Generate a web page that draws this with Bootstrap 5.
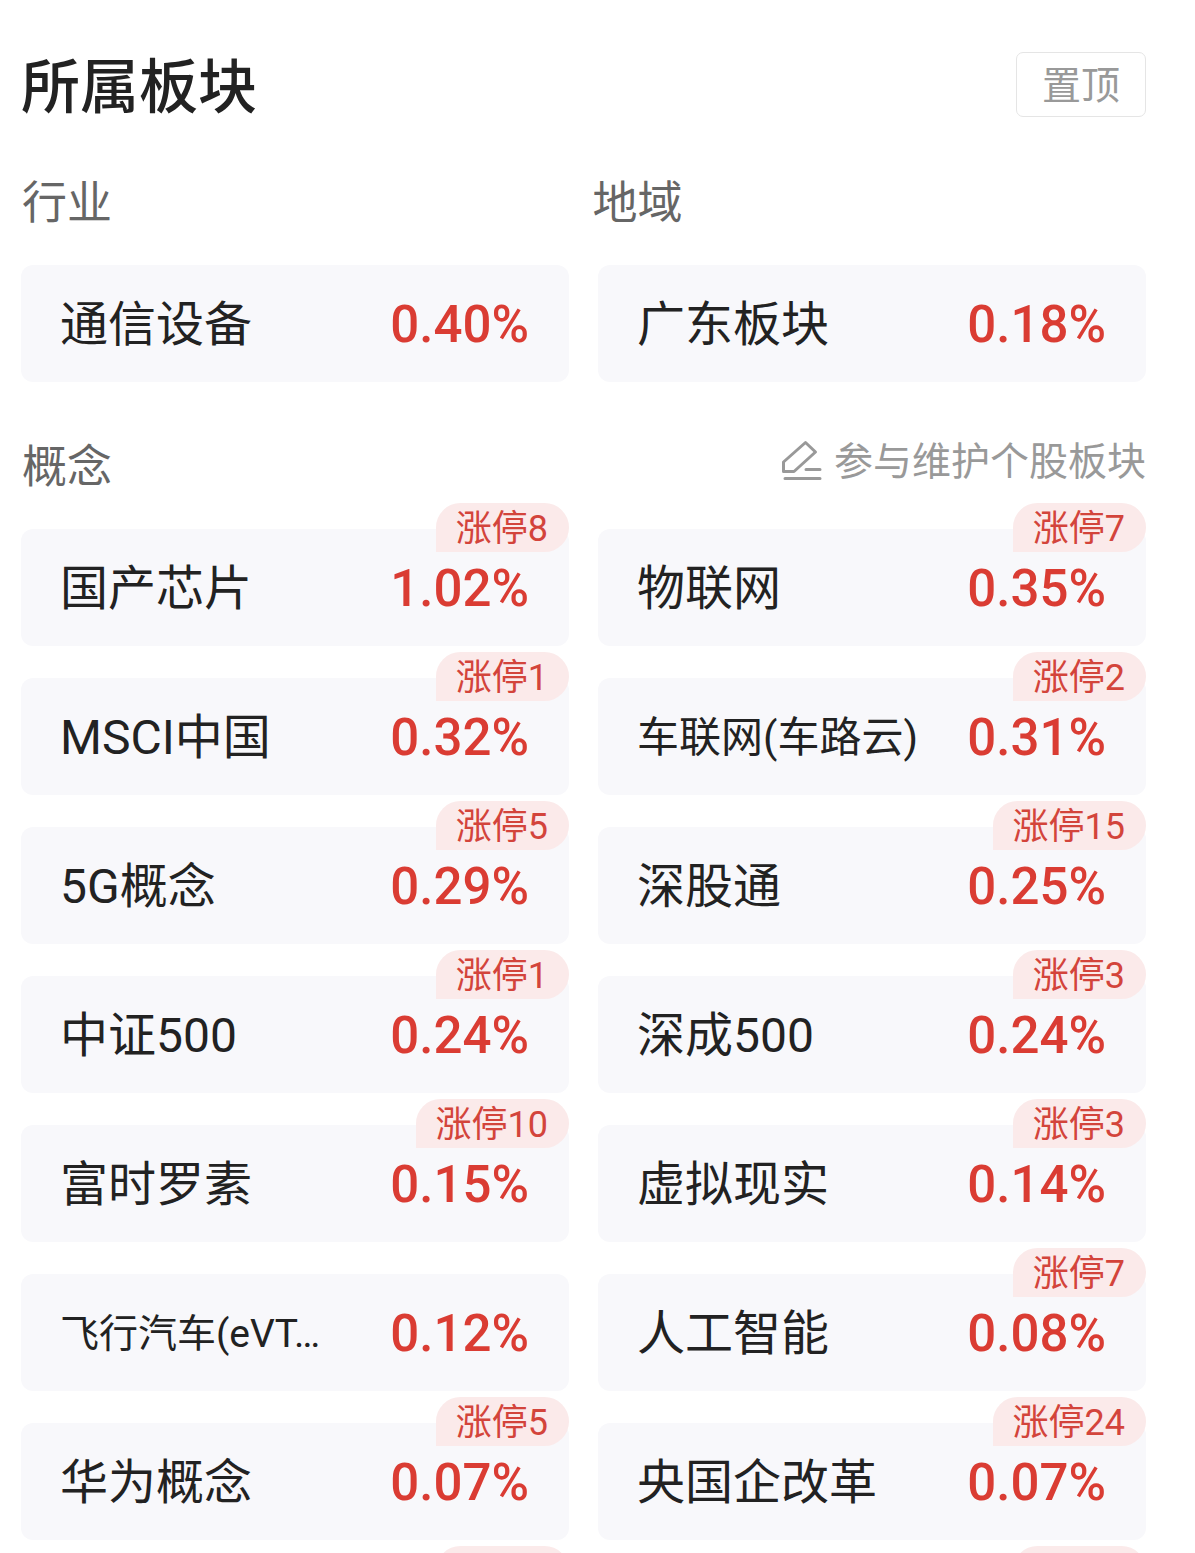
<!DOCTYPE html>
<html lang="zh-CN">
<head>
<meta charset="utf-8">
<meta name="viewport" content="width=device-width, initial-scale=1">
<title>所属板块</title>
<link href="https://cdn.jsdelivr.net/npm/bootstrap@5.3.0/dist/css/bootstrap.min.css" rel="stylesheet">
<style>
body { font-family: "Noto Sans CJK SC", sans-serif; color: #222; background: #fff; height: 100vh; overflow: hidden; }
.page { padding: 52px 49px 0 21px; }
.page-title { font-size: 59px; line-height: 61px; padding-bottom: 4px; font-weight: 500; }
.pin-btn { font-size: 39px; line-height: 59px; padding: 0 25px 4px; color: #999; border: 1px solid #e5e5e5; border-radius: 7px; background: #fff; }
.labels { margin: 53px 0 31px; column-gap: 16px; }
.group-label { font-size: 45px; line-height: 60px; padding: 0 0 4px 1px; font-weight: 400; color: #666; }
.concept-head { margin: 52px 0 31px; }
.edit-link { font-size: 39px; line-height: 56px; color: #999; gap: 11px; }
.edit-link span, .tile-name, .limit { font-family: Roboto, "Noto Sans CJK SC", sans-serif; }
.tiles { display: grid; grid-template-columns: 1fr 1fr; gap: 32px 29px; }
.tile { height: 117px; padding: 0 40px 0 39px; border-radius: 12px; background: #f8f8fb; color: #222; }
.tile-name { font-size: 48px; line-height: 72px; padding-top: 2px; white-space: nowrap; }
.name-md { font-size: 42px; }
.name-sm { font-size: 39px; }
.rate { font-family: Roboto, sans-serif; font-size: 51px; line-height: 60px; padding-top: 2px; font-weight: 500; color: #da3c33; }
.limit { top: -26px; right: 0; min-width: 133px; height: 49px; padding: 0 21px 0 20px; font-size: 36px; line-height: 52px; color: #d3443b; background: #fbeaea; border-radius: 25px 25px 25px 0; white-space: nowrap; }
</style>
</head>
<body>
<main class="page">
  <header class="d-flex justify-content-between align-items-center">
    <h1 class="page-title m-0">所属板块</h1>
    <button type="button" class="pin-btn">置顶</button>
  </header>

  <div class="labels d-flex">
    <h2 class="group-label m-0 flex-fill w-50">行业</h2>
    <h2 class="group-label m-0 flex-fill w-50">地域</h2>
  </div>
  <div class="tiles">
    <a href="#" class="tile d-flex justify-content-between align-items-center text-decoration-none"><span class="tile-name">通信设备</span><span class="rate">0.40%</span></a>
    <a href="#" class="tile d-flex justify-content-between align-items-center text-decoration-none"><span class="tile-name">广东板块</span><span class="rate">0.18%</span></a>
  </div>

  <div class="concept-head d-flex justify-content-between align-items-start">
    <h2 class="group-label m-0">概念</h2>
    <a href="#" class="edit-link d-flex align-items-center text-decoration-none">
      <svg width="42" height="44" viewBox="0 0 42 44" fill="none" stroke="#999" stroke-width="3" stroke-linecap="round" stroke-linejoin="round" aria-hidden="true"><path d="M24.5 2.5 34.5 12 13 31.5H2.5V22z"/><path d="M25 29.5H39M4 38.5H39"/></svg>
      <span>参与维护个股板块</span>
    </a>
  </div>
  <div class="tiles">
    <a href="#" class="tile position-relative d-flex justify-content-between align-items-center text-decoration-none"><span class="tile-name">国产芯片</span><span class="rate">1.02%</span><span class="limit position-absolute">涨停8</span></a>
    <a href="#" class="tile position-relative d-flex justify-content-between align-items-center text-decoration-none"><span class="tile-name">物联网</span><span class="rate">0.35%</span><span class="limit position-absolute">涨停7</span></a>
    <a href="#" class="tile position-relative d-flex justify-content-between align-items-center text-decoration-none"><span class="tile-name">MSCI中国</span><span class="rate">0.32%</span><span class="limit position-absolute">涨停1</span></a>
    <a href="#" class="tile position-relative d-flex justify-content-between align-items-center text-decoration-none"><span class="tile-name name-md">车联网(车路云)</span><span class="rate">0.31%</span><span class="limit position-absolute">涨停2</span></a>
    <a href="#" class="tile position-relative d-flex justify-content-between align-items-center text-decoration-none"><span class="tile-name">5G概念</span><span class="rate">0.29%</span><span class="limit position-absolute">涨停5</span></a>
    <a href="#" class="tile position-relative d-flex justify-content-between align-items-center text-decoration-none"><span class="tile-name">深股通</span><span class="rate">0.25%</span><span class="limit position-absolute">涨停15</span></a>
    <a href="#" class="tile position-relative d-flex justify-content-between align-items-center text-decoration-none"><span class="tile-name">中证500</span><span class="rate">0.24%</span><span class="limit position-absolute">涨停1</span></a>
    <a href="#" class="tile position-relative d-flex justify-content-between align-items-center text-decoration-none"><span class="tile-name">深成500</span><span class="rate">0.24%</span><span class="limit position-absolute">涨停3</span></a>
    <a href="#" class="tile position-relative d-flex justify-content-between align-items-center text-decoration-none"><span class="tile-name">富时罗素</span><span class="rate">0.15%</span><span class="limit position-absolute">涨停10</span></a>
    <a href="#" class="tile position-relative d-flex justify-content-between align-items-center text-decoration-none"><span class="tile-name">虚拟现实</span><span class="rate">0.14%</span><span class="limit position-absolute">涨停3</span></a>
    <a href="#" class="tile position-relative d-flex justify-content-between align-items-center text-decoration-none"><span class="tile-name name-sm">飞行汽车(eVT…</span><span class="rate">0.12%</span></a>
    <a href="#" class="tile position-relative d-flex justify-content-between align-items-center text-decoration-none"><span class="tile-name">人工智能</span><span class="rate">0.08%</span><span class="limit position-absolute">涨停7</span></a>
    <a href="#" class="tile position-relative d-flex justify-content-between align-items-center text-decoration-none"><span class="tile-name">华为概念</span><span class="rate">0.07%</span><span class="limit position-absolute">涨停5</span></a>
    <a href="#" class="tile position-relative d-flex justify-content-between align-items-center text-decoration-none"><span class="tile-name">央国企改革</span><span class="rate">0.07%</span><span class="limit position-absolute">涨停24</span></a>
    <div class="tile position-relative"><span class="limit position-absolute"></span></div>
    <div class="tile position-relative"><span class="limit position-absolute"></span></div>
  </div>
</main>
<script src="https://cdn.jsdelivr.net/npm/bootstrap@5.3.0/dist/js/bootstrap.bundle.min.js"></script>
</body>
</html>
